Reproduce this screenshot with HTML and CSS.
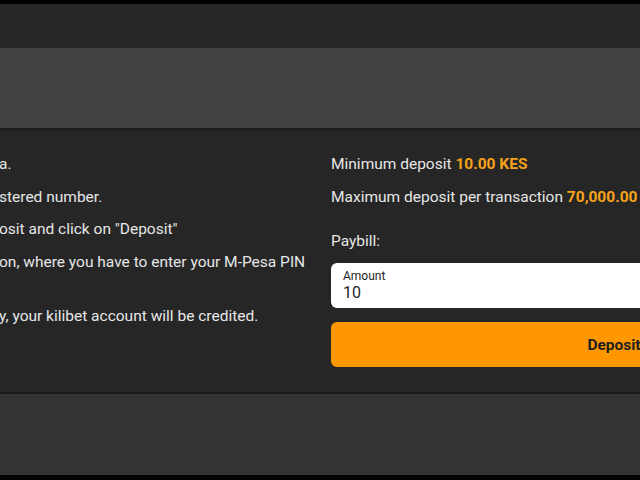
FILE: index.html
```html
<!DOCTYPE html>
<html lang="en">
<head>
<meta charset="utf-8">
<title>Deposit</title>
<link rel="stylesheet" href="styles.css">
</head>
<body>
<div class="screen">
  <div class="top-edge"></div>
  <header class="topbar"></header>
  <div class="band"></div>
  <main class="content">
    <ol class="steps">
      <li class="step">a.</li>
      <li class="step">stered number.</li>
      <li class="step">osit and click on "Deposit"</li>
      <li class="step step-wrap">on, where you have to enter your M-Pesa PIN</li>
      <li class="step">y, your kilibet account will be credited.</li>
    </ol>
    <section class="deposit">
      <p class="limit">Minimum deposit <span class="accent">10.00 KES</span></p>
      <p class="limit">Maximum deposit per transaction <span class="accent">70,000.00 KES</span></p>
      <p class="paybill">Paybill:</p>
      <label class="field">
        <span class="field-label">Amount</span>
        <span class="field-value">10</span>
      </label>
      <button class="deposit-btn">Deposit</button>
    </section>
  </main>
  <footer class="footer"></footer>
  <div class="bottom-edge"></div>
</div>
</body>
</html>
```
FILE: styles.css
```css
* { box-sizing: border-box; }
html, body { margin: 0; padding: 0; background: #000; }
body {
  width: 640px;
  height: 480px;
  overflow: hidden;
  font-family: Roboto, "Liberation Sans", sans-serif;
  color: #e6e6e6;
}
.screen {
  display: flex;
  flex-direction: column;
  height: 480px;
  width: 640px;
  overflow: hidden;
}
.top-edge { height: 4px; background: #000; flex: none; }
.topbar { height: 44px; background: #272727; flex: none; }
.band { height: 83px; background: #424242; flex: none; border-bottom: 3px solid #1f1f1f; }
.content {
  flex: none;
  height: 263px;
  background: #262626;
  border-bottom: 2px solid #1a1a1a;
  display: flex;
  padding-top: 22px;
  overflow: hidden;
}
.steps {
  list-style: none;
  margin: 0 0 0 -1px;
  padding: 0;
  width: 332px;
  flex: none;
  font-size: 15.5px;
  line-height: 22px;
}
.step { margin: 0 0 10.5px; white-space: nowrap; }
.step-wrap { height: 44px; }
.deposit {
  flex: none;
  width: 566px;
  font-size: 15.5px;
  line-height: 22px;
}
.limit { margin: 0 0 11px; white-space: nowrap; }
.accent { color: #f7a21b; font-weight: 700; }
.paybill { margin: 22px 0 11px; }
.field {
  display: flex;
  flex-direction: column;
  height: 45px;
  background: #fff;
  border-radius: 6px;
  padding: 6px 12px 0;
  color: #1e1e1e;
}
.field-label { font-size: 12px; line-height: 14px; }
.field-value { font-size: 16px; line-height: 20px; }
.deposit-btn {
  display: block;
  width: 100%;
  height: 45px;
  margin-top: 14px;
  border: none;
  border-radius: 6px;
  background: #ff9800;
  color: #1f1f1f;
  font-family: Roboto, "Liberation Sans", sans-serif;
  font-size: 15.5px;
  font-weight: 700;
}
.footer { height: 81px; background: #333; flex: none; }
.bottom-edge { flex: 1; background: #000; }
```
